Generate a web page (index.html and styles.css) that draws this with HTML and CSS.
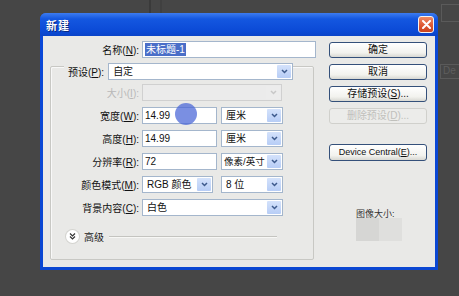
FILE: index.html
```html
<!DOCTYPE html>
<html lang="zh-CN">
<head>
<meta charset="UTF-8" />
<meta name="viewport" content="width=device-width, initial-scale=1" />
<title>新建</title>
<link rel="stylesheet" href="styles.css">
</head>
<body>
  <div class="desk">
    <div class="bg-line bg-line-a"></div>
    <div class="bg-line bg-line-b"></div>
    <div class="bg-box bg-box-a"></div>
    <div class="bg-box bg-box-b">De</div>

    <div class="dialog">
      <div class="titlebar">
        <span class="title">新建</span>
        <span class="close">
          <svg width="9" height="9" viewBox="0 0 9 9"><path d="M1 1 L8 8 M8 1 L1 8" stroke="#fff" stroke-width="2" stroke-linecap="round"/></svg>
        </span>
      </div>
      <div class="client">
        <div class="form">
          <div class="name-row">
            <span class="lbl lbl-name">名称(<u>N</u>):</span>
            <div class="text w-name"><span class="selected">未标题-1</span></div>
          </div>

          <div class="group">
            <div class="legend">
              <span class="lbl-legend">预设(<u>P</u>):</span>
              <div class="select w-preset"><span class="val">自定</span><span class="arrow"><svg width="7" height="5" viewBox="0 0 7 5"><path d="M1 1 L3.5 3.5 L6 1" fill="none" stroke="#3d5a8c" stroke-width="1.5"/></svg></span></div>
            </div>
            <div class="row">
              <span class="lbl disabled">大小(<u>I</u>):</span>
              <div class="select w-full is-disabled"><span class="val"></span><span class="arrow"><svg width="7" height="5" viewBox="0 0 7 5"><path d="M1 1 L3.5 3.5 L6 1" fill="none" stroke="#c8c8c8" stroke-width="1.5"/></svg></span></div>
            </div>
            <div class="row">
              <span class="lbl">宽度(<u>W</u>):</span>
              <div class="text w-num">14.99</div>
              <div class="select w-unit"><span class="val">厘米</span><span class="arrow"><svg width="7" height="5" viewBox="0 0 7 5"><path d="M1 1 L3.5 3.5 L6 1" fill="none" stroke="#3d5a8c" stroke-width="1.5"/></svg></span></div>
            </div>
            <div class="row">
              <span class="lbl">高度(<u>H</u>):</span>
              <div class="text w-num">14.99</div>
              <div class="select w-unit"><span class="val">厘米</span><span class="arrow"><svg width="7" height="5" viewBox="0 0 7 5"><path d="M1 1 L3.5 3.5 L6 1" fill="none" stroke="#3d5a8c" stroke-width="1.5"/></svg></span></div>
            </div>
            <div class="row">
              <span class="lbl">分辨率(<u>R</u>):</span>
              <div class="text w-num">72</div>
              <div class="select w-unit"><span class="val tight">像素/英寸</span><span class="arrow"><svg width="7" height="5" viewBox="0 0 7 5"><path d="M1 1 L3.5 3.5 L6 1" fill="none" stroke="#3d5a8c" stroke-width="1.5"/></svg></span></div>
            </div>
            <div class="row">
              <span class="lbl">颜色模式(<u>M</u>):</span>
              <div class="select w-mode"><span class="val">RGB 颜色</span><span class="arrow"><svg width="7" height="5" viewBox="0 0 7 5"><path d="M1 1 L3.5 3.5 L6 1" fill="none" stroke="#3d5a8c" stroke-width="1.5"/></svg></span></div>
              <div class="select w-unit"><span class="val">8 位</span><span class="arrow"><svg width="7" height="5" viewBox="0 0 7 5"><path d="M1 1 L3.5 3.5 L6 1" fill="none" stroke="#3d5a8c" stroke-width="1.5"/></svg></span></div>
            </div>
            <div class="row">
              <span class="lbl">背景内容(<u>C</u>):</span>
              <div class="select w-bg"><span class="val">白色</span><span class="arrow"><svg width="7" height="5" viewBox="0 0 7 5"><path d="M1 1 L3.5 3.5 L6 1" fill="none" stroke="#3d5a8c" stroke-width="1.5"/></svg></span></div>
            </div>
            <div class="advanced">
              <span class="toggle">
                <svg width="7" height="7" viewBox="0 0 7 7"><path d="M1 0.5 L3.5 3 L6 0.5 M1 3.5 L3.5 6 L6 3.5" fill="none" stroke="#333" stroke-width="1.2"/></svg>
              </span>
              <span class="adv-label">高级</span>
              <span class="adv-line"></span>
            </div>
          </div>
        </div>

        <div class="buttons">
          <div class="button">确定</div>
          <div class="button">取消</div>
          <div class="button">存储预设(<u>S</u>)...</div>
          <div class="button is-disabled">删除预设(<u>D</u>)...</div>
          <div class="button latin gap-top">Device Central(<u>E</u>)...</div>
          <div class="image-size">
            <span class="size-label">图像大小:</span>
            <div class="size-block"><span class="size-a"></span><span class="size-b"></span></div>
          </div>
        </div>
      </div>
    </div>

    <div class="cursor"></div>
  </div>
</body>
</html>
```

FILE: styles.css
```css
html, body {
  margin: 0;
  padding: 0;
}
body {
  font-family: 'Liberation Sans', 'Noto Sans CJK SC', sans-serif;
  font-size: 10px;
  color: #111;
  background-color: #464646;
}
u {
  text-decoration: underline;
  text-underline-offset: 1px;
}
.desk {
  position: relative;
  width: 459px;
  height: 296px;
  overflow: hidden;
  padding-top: 13px;
  box-sizing: border-box;
}
.bg-line {
  position: absolute;
  top: 0;
  width: 2px;
  height: 13px;
  background-color: #3a3a3a;
}
.bg-line-a { left: 149px; }
.bg-line-b { left: 160px; background-color: #404040; }
.bg-box {
  position: absolute;
  border: 1px solid #5a5a5a;
  color: #5e5e5e;
  font-size: 10px;
  line-height: 12px;
}
.bg-box-a { left: 441px; top: 4px; width: 17px; height: 16px; border-right: none; }
.bg-box-b { left: 440px; top: 64px; width: 16px; height: 13px; padding-left: 2px; border-right: none; }

/* dialog window */
.dialog {
  margin-left: 40px;
  width: 398px;
  height: 257px;
  background: linear-gradient(#2e6cec, #0a48d8 4px, #0b47d2);
  border-radius: 6px 6px 0 0;
  display: flex;
  flex-direction: column;
}
.titlebar {
  height: 23px;
  display: flex;
  align-items: center;
  justify-content: space-between;
  padding: 0 4px 0 6px;
  background: linear-gradient(#3d7cf0, #1457e0 6px, #0b4ad6 18px, #0a44c8);
  border-radius: 6px 6px 0 0;
}
.title {
  color: #fff;
  font-weight: bold;
  font-size: 11px;
  letter-spacing: 1px;
  text-shadow: 1px 1px 0 #0a2a80;
}
.close {
  width: 14px;
  height: 15px;
  border: 1px solid #f4f4f4;
  border-radius: 3px;
  background: linear-gradient(#ef8a64, #dc5530 60%, #c9431f);
  display: flex;
  align-items: center;
  justify-content: center;
}
.client {
  flex: 1;
  margin: 0 3px 3px;
  background-color: #e9e9e7;
  display: flex;
}

/* left form */
.form {
  width: 273px;
  padding-left: 7px;
  padding-top: 5px;
  box-sizing: border-box;
}
.name-row {
  display: flex;
  align-items: center;
  gap: 3px;
}
.lbl {
  width: 88px;
  text-align: right;
  white-space: nowrap;
}
.lbl-name {
  width: 89px;
}
.lbl.disabled {
  color: #b8b8b8;
}
.text {
  height: 17px;
  box-sizing: border-box;
  border: 1px solid #a4b6cc;
  background-color: #fff;
  padding-left: 2px;
  line-height: 15px;
  font-size: 10px;
}
.w-name { width: 174px; }
.w-num { width: 75px; }
.selected {
  display: inline-block;
  background-color: #4a6ec8;
  color: #fff;
  line-height: 13px;
  padding: 0 1px;
}
.select {
  height: 17px;
  box-sizing: border-box;
  border: 1px solid #a4b6cc;
  background-color: #fff;
  display: flex;
  align-items: stretch;
}
.select .val {
  flex: 1;
  padding-left: 4px;
  line-height: 15px;
  white-space: nowrap;
  overflow: hidden;
}
.select .val.tight {
  padding-left: 2px;
  font-size: 9.5px;
}
.select .arrow {
  width: 14px;
  margin: 1px;
  background: linear-gradient(#d4e2fb, #b7cdf6);
  border-radius: 1px;
  display: flex;
  align-items: center;
  justify-content: center;
}
.select.is-disabled {
  background-color: #ebebeb;
  border-color: #d0d0d0;
}
.select.is-disabled .arrow {
  background: #ececec;
}
.w-preset { width: 185px; }
.w-full { width: 140px; }
.w-unit { width: 62px; }
.w-mode { width: 71px; }
.w-bg { width: 141px; }
.row .w-unit { margin-left: 1px; }
.row .w-mode + .w-unit { margin-left: 5px; }

.group {
  margin-top: 8px;
  width: 264px;
  height: 194px;
  box-sizing: border-box;
  border: 1px solid #c8c8c4;
  border-radius: 2px;
  box-shadow: inset 1px 1px 0 #f8f8f8;
}
.legend {
  margin-top: -4px;
  padding-left: 13px;
  display: flex;
  align-items: center;
}
.lbl-legend {
  background-color: #e9e9e7;
  padding: 0 4px;
  white-space: nowrap;
}
.row {
  display: flex;
  align-items: center;
  gap: 3px;
  margin-top: 6px;
}
.legend + .row {
  margin-top: 4px;
}
.advanced {
  display: flex;
  align-items: center;
  margin-top: 13px;
  padding-left: 15px;
  padding-right: 36px;
}
.toggle {
  width: 13px;
  height: 13px;
  border-radius: 50%;
  background-color: #fff;
  box-shadow: 0 0 0 1px #d4d4d0;
  display: flex;
  align-items: center;
  justify-content: center;
}
.adv-label {
  margin-left: 5px;
  color: #222;
}
.adv-line {
  flex: 1;
  margin-left: 5px;
  height: 1px;
  background-color: #c4c4c0;
  border-bottom: 1px solid #f7f7f5;
}

/* right buttons */
.buttons {
  margin-left: 13px;
  padding-top: 6px;
  width: 98px;
  display: flex;
  flex-direction: column;
  gap: 6px;
}
.button {
  height: 16px;
  box-sizing: border-box;
  border: 1px solid #34507a;
  border-radius: 3px;
  background: linear-gradient(#ffffff, #f2f2ee 70%, #d8d8d2);
  text-align: center;
  line-height: 14px;
  white-space: nowrap;
}
.button.is-disabled {
  border-color: #d0d0cc;
  background: #ececea;
  color: #c0c0bc;
}
.button.latin {
  font-size: 9px;
  height: 17px;
  line-height: 15px;
}
.gap-top {
  margin-top: 14px;
}
.image-size {
  margin-top: 42px;
  padding-left: 27px;
  display: flex;
  flex-direction: column;
}
.size-label {
  font-size: 9px;
  line-height: 10px;
  height: 9px;
  overflow: hidden;
  color: #333;
}
.size-block {
  width: 46px;
  height: 23px;
  display: flex;
}
.size-a { flex: 1; background-color: #d6d6d4; }
.size-b { flex: 1; background-color: #dfdfdd; }

/* pointer highlight from the recording */
.cursor {
  position: absolute;
  left: 175px;
  top: 103px;
  width: 22px;
  height: 22px;
  border-radius: 50%;
  background-color: rgba(70, 100, 215, 0.72);
}
```
